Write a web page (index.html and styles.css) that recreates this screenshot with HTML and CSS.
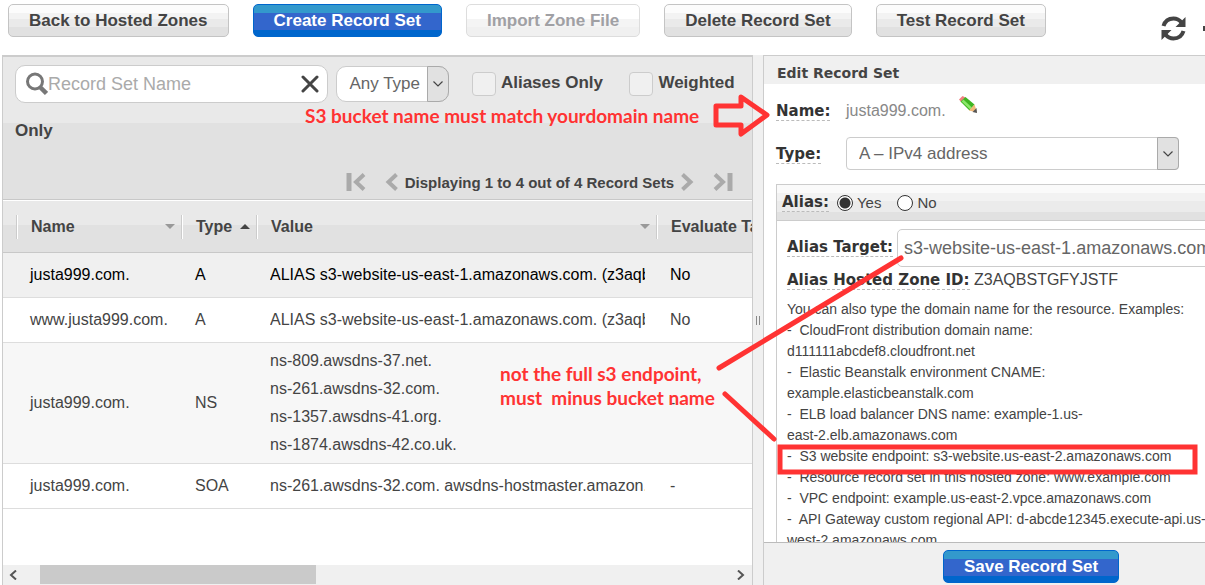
FILE: index.html
```html
<!DOCTYPE html>
<html lang="en">
<head>
<meta charset="utf-8">
<title>Record Sets</title>
<link rel="stylesheet" href="styles.css">
</head>
<body>
<div class="app">
  <header class="toolbar">
    <button type="button" class="btn">Back to Hosted Zones</button>
    <button type="button" class="btn btn-primary">Create Record Set</button>
    <button type="button" class="btn" disabled>Import Zone File</button>
    <button type="button" class="btn">Delete Record Set</button>
    <button type="button" class="btn">Test Record Set</button>
    <div class="tools">
      <button type="button" class="tool" aria-label="Refresh">
        <svg width="25" height="25" viewBox="0 0 25 25"><g fill="none" stroke="#444" stroke-width="4"><path d="M2.500 10C4 5 8 2.500 12.500 2.500c3.500 0 6 1.500 8 4"/><path d="M22.500 15c-1.500 5-5.500 7.500-10 7.500-3.500 0-6-1.500-8-4"/></g><path d="M24.500 1v10h-10zM.5 24V14h10z" fill="#444"/></svg>
      </button>
      <button type="button" class="tool" aria-label="Settings">
        <svg width="25" height="25" viewBox="0 0 25 25"><circle cx="12.500" cy="12.500" r="7" fill="none" stroke="#444" stroke-width="5"/><path d="M0 10h5v5H0zM20 10h5v5h-5zM10 0h5v5h-5zM10 20h5v5h-5z" fill="#444"/></svg>
      </button>
    </div>
  </header>

  <main class="panes">
    <section class="list">
      <div class="filters">
        <div class="filter-line">
          <span class="search">
            <svg width="22" height="24" viewBox="0 0 22 24" fill="none" stroke="#777"><circle cx="9" cy="9.500" r="7.500" stroke-width="3"/><path d="M14.500 15.500l6 6" stroke-width="4.500"/></svg>
            <input class="search-input" type="text" placeholder="Record Set Name" aria-label="Record Set Name">
            <button type="button" class="clear" aria-label="Clear"><svg width="18" height="18" viewBox="0 0 18 18"><path d="M2 2l14 14M16 2L2 16" stroke="#444" stroke-width="3" stroke-linecap="round"/></svg></button>
          </span>
          <span class="select select-round">
            <select aria-label="Record type"><option>Any Type</option></select>
            <span class="select-arrow"><svg width="10" height="6" viewBox="0 0 10 6"><path d="M.5.5L5 5 9.500.5" fill="none" stroke="#444" stroke-width="1.200"/></svg></span>
          </span>
          <input class="check" type="checkbox" id="aliases"><label class="check-label" for="aliases">Aliases Only</label>
          <input class="check" type="checkbox" id="weighted"><label class="check-label" for="weighted">Weighted Only</label>
        </div>
        <nav class="pager" aria-label="Pages">
          <button type="button" class="page-btn" aria-label="First page"><svg width="20" height="18" viewBox="0 0 20 18" fill="none" stroke="#aaa"><path d="M3 0v18" stroke-width="5"/><path d="M18 1.500L10 9l8 7.500" stroke-width="4"/></svg></button>
          <button type="button" class="page-btn" aria-label="Previous page"><svg width="13" height="18" viewBox="0 0 13 18" fill="none" stroke="#aaa"><path d="M11.500 1.500L3.500 9l8 7.500" stroke-width="4"/></svg></button>
          <span class="page-text">Displaying 1 to 4 out of 4 Record Sets</span>
          <button type="button" class="page-btn" aria-label="Next page"><svg width="13" height="18" viewBox="0 0 13 18" fill="none" stroke="#aaa"><path d="M1.500 1.500l8 7.500-8 7.500" stroke-width="4"/></svg></button>
          <button type="button" class="page-btn" aria-label="Last page"><svg width="20" height="18" viewBox="0 0 20 18" fill="none" stroke="#aaa"><path d="M17 0v18" stroke-width="5"/><path d="M2 1.500L10 9l-8 7.500" stroke-width="4"/></svg></button>
        </nav>
      </div>

      <div class="table-wrap">
        <table class="records">
          <colgroup><col class="c-gutter"><col class="c-name"><col class="c-type"><col class="c-value"><col class="c-eval"></colgroup>
          <thead>
            <tr>
              <td></td>
              <th scope="col"><span class="head"><span>Name</span><span class="sort"></span></span></th>
              <th scope="col"><span class="head"><span>Type</span><span class="sort sort-up"></span></span></th>
              <th scope="col"><span class="head"><span>Value</span><span class="sort"></span></span></th>
              <th scope="col"><span class="head"><span>Evaluate Target Health</span></span></th>
            </tr>
          </thead>
          <tbody>
            <tr class="selected"><td></td><td>justa999.com.</td><td>A</td><td><div class="clip">ALIAS s3-website-us-east-1.amazonaws.com. (z3aqbstgfyjstf)</div></td><td>No</td></tr>
            <tr><td></td><td>www.justa999.com.</td><td>A</td><td><div class="clip">ALIAS s3-website-us-east-1.amazonaws.com. (z3aqbstgfyjstf)</div></td><td>No</td></tr>
            <tr class="alt"><td></td><td>justa999.com.</td><td>NS</td><td><div class="clip">ns-809.awsdns-37.net.<br>ns-261.awsdns-32.com.<br>ns-1357.awsdns-41.org.<br>ns-1874.awsdns-42.co.uk.</div></td><td>-</td></tr>
            <tr><td></td><td>justa999.com.</td><td>SOA</td><td><div class="clip">ns-261.awsdns-32.com. awsdns-hostmaster.amazon.com.</div></td><td>-</td></tr>
          </tbody>
        </table>
      </div>

      <div class="scroll">
        <svg width="8" height="10" viewBox="0 0 8 10"><path d="M7 .5L2 5l5 4.500" fill="none" stroke="#555" stroke-width="2"/></svg>
        <div class="track"><div class="thumb"></div></div>
        <svg width="8" height="10" viewBox="0 0 8 10"><path d="M1 .5L6 5 1 9.500" fill="none" stroke="#555" stroke-width="2"/></svg>
      </div>
    </section>

    <div class="splitter"><span class="grip"></span></div>

    <section class="edit">
      <form class="edit-inner">
        <h2 class="edit-title">Edit Record Set</h2>
        <div class="edit-body">
          <div class="row row-name">
            <span class="cell-label"><span class="label">Name:</span></span>
            <span class="name-value">justa999.com.</span>
            <svg class="pencil" width="20" height="19" viewBox="0 0 20 19"><path d="M1 4.500L4.500 1l3 1.500L3.500 7.500z" fill="#f08080"/><path d="M2.500 6.500L7.500 2l9 7.500-5 6z" fill="#3fb522"/><path d="M4.500 5.500l8.500 8" stroke="#8be86a" stroke-width="2.500"/><path d="M11 15.500l5.500-6 2.500 8z" fill="#f0b878"/><path d="M14.500 17l4-4 .5 5z" fill="#555"/></svg>
          </div>
          <div class="row row-type">
            <span class="cell-label"><label class="label" for="rtype">Type:</label></span>
            <span class="select select-wide">
              <select id="rtype"><option>A – IPv4 address</option></select>
              <span class="select-arrow"><svg width="10" height="6" viewBox="0 0 10 6"><path d="M.5.5L5 5 9.500.5" fill="none" stroke="#444" stroke-width="1.200"/></svg></span>
            </span>
          </div>
          <div class="alias">
            <div class="alias-head" role="radiogroup" aria-labelledby="alias-label">
              <span class="label" id="alias-label">Alias:</span>
              <label class="radio"><input type="radio" name="alias" checked>Yes</label>
              <label class="radio"><input type="radio" name="alias">No</label>
            </div>
            <div class="alias-body">
              <div class="target">
                <label class="label" for="target">Alias Target:</label>
                <input id="target" class="target-input" type="text" value="s3-website-us-east-1.amazonaws.com">
              </div>
              <div class="zone"><span class="label">Alias Hosted Zone ID:</span> Z3AQBSTGFYJSTF</div>
              <div class="help">
                You can also type the domain name for the resource. Examples:<br>
                -&nbsp; CloudFront distribution domain name: d111111abcdef8.cloudfront.net<br>
                -&nbsp; Elastic Beanstalk environment CNAME: example.elasticbeanstalk.com<br>
                -&nbsp; ELB load balancer DNS name: example-1.us-<span class="host">east-2.elb.amazonaws.com</span><br>
                -&nbsp; S3 website endpoint: s3-website.us-east-2.amazonaws.com<br>
                -&nbsp; Resource record set in this hosted zone: www.example.com<br>
                -&nbsp; VPC endpoint: example.us-east-2.vpce.amazonaws.com<br>
                -&nbsp; API Gateway custom regional API: d-abcde12345.execute-api.us-<span class="host">west-2.amazonaws.com</span>
              </div>
            </div>
          </div>
        </div>
        <footer class="edit-foot"><button type="button" class="btn btn-primary">Save Record Set</button></footer>
      </form>
    </section>
  </main>

  <svg class="marks" width="1205" height="585" viewBox="0 0 1205 585" fill="none" stroke="#f33" stroke-width="5" stroke-linecap="round" stroke-linejoin="round">
    <path d="M716 106h25v-9l26 18-26 19v-9h-25z"/>
    <path d="M901 258L719 368M725 394l49 45"/>
    <rect x="780" y="447" width="415" height="25" stroke-linejoin="miter"/>
  </svg>
  <p class="note note-bucket">S3 bucket name must match yourdomain name</p>
  <p class="note note-endpoint">not the full s3 endpoint,<br>must&nbsp; minus bucket name</p>
</div>
</body>
</html>
```
FILE: styles.css
```css
* { box-sizing: border-box; }
body {
  margin: 0;
  font-family: "Liberation Sans", Arial, sans-serif;
  font-size: 16px;
  color: #444;
  background: #fff;
}
button, input, select { font: inherit; color: inherit; margin: 0; }
.app {
  position: relative;
  display: flex;
  flex-direction: column;
  height: 100vh;
  overflow: hidden;
}

/* Toolbar */
.toolbar {
  display: flex;
  flex: none;
  gap: 24px;
  padding: 4px 0 14px 8px;
}
.btn {
  flex: none;
  height: 33px;
  padding: 1px 20px 0;
  border: 1px solid #c4c4c4;
  border-radius: 5px;
  font-size: 17px;
  font-weight: bold;
  white-space: nowrap;
  background: linear-gradient(#fcfcfc 0 27%, #f3f3f3 27% 46%, #eaeaea 46% 70%, #e1e1e1 70%);
}
.btn:disabled {
  color: #a0a0a4;
  border-color: #ddd;
  background: linear-gradient(#fff 0 46%, #f4f4f4 46% 70%, #f0f0f0 70%);
}
.btn-primary {
  color: #fff;
  border-color: #06c;
  background: linear-gradient(#39c 0 27%, #36c 27% 80%, #06c 80%);
}
.tools {
  display: flex;
  gap: 17px;
  width: 44px;
  margin-left: auto;
  padding-top: 12px;
  overflow: hidden;
}
.tool { flex: none; padding: 0; border: 0; background: none; line-height: 0; height: 25px; }

/* Panes */
.panes { display: flex; flex: 1; min-height: 0; }
.list {
  display: flex;
  flex: 1;
  flex-direction: column;
  min-width: 0;
  margin-left: 2px;
  border-left: 1px solid #ccc;
  border-top: 2px solid #ccc;
}
.filters {
  flex: none;
  padding: 2px 12px 0;
  background: linear-gradient(#e9e9e9 0 66px, #e1e1e1 66px);
  border-bottom: 1px solid #c8c8c8;
}
.filter-line { line-height: 48px; }
.search {
  display: inline-flex;
  align-items: center;
  width: 313px;
  height: 38px;
  padding: 0 8px 0 10px;
  vertical-align: middle;
  background: #fff;
  border: 1px solid #ccc;
  border-radius: 10px;
}
.search-input { flex: 1; min-width: 0; padding: 0; border: 0; outline: 0; background: none; font-size: 18px; }
.search-input::placeholder { color: #aaa; opacity: 1; }
.search svg { flex: none; }
.clear { padding: 0; border: 0; background: none; line-height: 0; }
.select { position: relative; display: inline-block; vertical-align: middle; line-height: 1; }
.select select {
  appearance: none;
  width: 100%;
  height: 100%;
  padding: 0 24px 0 12px;
  color: #666;
  background: #fff;
  border: 1px solid #ccc;
  border-radius: 4px;
}
.select-arrow {
  position: absolute;
  top: 0;
  right: 0;
  bottom: 0;
  display: flex;
  align-items: center;
  justify-content: center;
  width: 22px;
  background: #e1e1e1;
  border: 1px solid #aaa;
  border-radius: 0 4px 4px 0;
  pointer-events: none;
}
.select-round { width: 113px; height: 36px; margin-left: 4px; font-size: 17px; }
.select-round select { border-radius: 10px; }
.select-round .select-arrow { border-radius: 0 10px 10px 0; }
.check {
  appearance: none;
  width: 24px;
  height: 24px;
  margin: 0 5px 0 18px;
  vertical-align: middle;
  background: #f0f0f0;
  border: 1px solid #ccc;
  border-radius: 4px;
}
.check-label { margin-right: 4px; font-size: 17px; font-weight: bold; }
.pager {
  display: flex;
  align-items: center;
  justify-content: flex-end;
  height: 44px;
  padding: 10px 7px 0 0;
  gap: 19px;
}
.page-btn { padding: 0; border: 0; background: none; line-height: 0; }
.page-text { margin: 0 -12px; font-size: 15px; font-weight: bold; }

/* Record table */
.table-wrap { flex: 1; min-height: 0; overflow: hidden; }
.records { width: 854px; table-layout: fixed; border-collapse: separate; border-spacing: 0; }
.c-gutter { width: 14px; }
.c-name { width: 165px; }
.c-type { width: 75px; }
.c-value { width: 400px; }
.c-eval { width: 200px; }
.records thead td, .records th {
  height: 53px;
  padding: 0;
  text-align: left;
  border-top: 1px solid #fff;
  border-bottom: 1px solid #c8c8c8;
  background: linear-gradient(#e9e9e9 0 24px, #e1e1e1 24px);
}
.head {
  display: flex;
  align-items: center;
  justify-content: space-between;
  height: 24px;
  padding: 0 7px 0 13px;
  border-left: 1px solid #fff;
  box-shadow: -1px 0 #ccc;
  white-space: nowrap;
}
.sort { border: 5px solid transparent; border-top-color: #999; border-bottom: 0; }
.sort-up { border-top: 0; border-bottom: 5px solid #444; }
.records tbody td {
  padding: 4px 12px 4px 13px;
  height: 45px;
  line-height: 28px;
  white-space: nowrap;
  border-bottom: 1px solid #ddd;
}
.clip { overflow: hidden; }
.selected { color: #000; background: #f0f0f0; }
.alt { background: #f7f7f7; }

.scroll {
  display: flex;
  flex: none;
  align-items: center;
  gap: 23px;
  height: 20px;
  padding: 0 7px 0 6px;
  background: #f0f0f0;
}
.scroll svg { flex: none; }
.track { flex: 1; height: 100%; padding-bottom: 1px; }
.thumb { width: 41%; height: 100%; background: #cacaca; }

.splitter {
  display: flex;
  flex: none;
  align-items: center;
  justify-content: center;
  width: 12px;
  background: #f0f0f0;
  border: 1px solid #ccc;
  border-width: 0 1px;
}
.grip { width: 4px; height: 9px; border: 1px solid #888; border-width: 0 1px; }

/* Edit form */
.edit { flex: none; width: 441px; overflow: hidden; border-top: 1px solid #ccc; }
.edit-inner { display: flex; flex-direction: column; width: 534px; height: 100%; }
.edit-title {
  flex: none;
  margin: 0;
  padding: 7px 13px 1px;
  font: bold 14px/20px "DejaVu Sans", Verdana, sans-serif;
  background: #f0f0f0;
}
.edit-body { flex: 1; min-height: 0; padding: 11px 12px 0; overflow: hidden; }
.label {
  font: bold 15px/17px "DejaVu Sans", Verdana, sans-serif;
  color: #333;
  border-bottom: 1px dashed #bbb;
}
.row { display: flex; align-items: center; }
.cell-label { width: 70px; line-height: 17px; }
.row-name { height: 32px; }
.name-value { width: 112px; color: #888; }
.pencil { align-self: flex-start; }
.row-type { height: 53px; }
.select-wide { width: 333px; height: 33px; font-size: 17px; }
.alias { height: 600px; margin-top: 4px; border: 1px solid #ccc; }
.alias-head {
  display: flex;
  align-items: center;
  gap: 8px;
  height: 36px;
  padding-left: 5px;
  border-bottom: 1px solid #ccc;
  background: linear-gradient(#fafafa 0 22%, #f2f2f2 22% 46%, #ebebeb 46% 78%, #e1e1e1 78%);
}
.radio { display: flex; align-items: center; gap: 4px; margin-right: 8px; font-size: 15px; }
.radio input {
  appearance: none;
  width: 16px;
  height: 16px;
  border: 1px solid #333;
  border-radius: 50%;
  background: #fff;
}
.radio input:checked { background: radial-gradient(#333 0 5px, #fff 6px); }
.alias-body { padding: 8px 10px; }
.target { display: flex; align-items: center; gap: 4px; }
.target-input {
  flex: 1;
  min-width: 0;
  height: 38px;
  padding: 0 6px;
  font-size: 18px;
  color: #666;
  border: 1px solid #ccc;
  border-radius: 5px;
}
.zone { padding-top: 1px; line-height: 24px; }
.help { width: 433px; margin-top: 7px; font-size: 14px; line-height: 21px; }
.host { white-space: nowrap; }
.edit-foot {
  display: flex;
  flex: none;
  justify-content: center;
  padding: 7px 0 2px;
  background: #f0f0f0;
  border-top: 1px solid #bbb;
}

/* Callouts drawn over the panes */
.marks { position: absolute; top: 0; left: 0; pointer-events: none; }
.note {
  position: absolute;
  margin: 0;
  color: #f33;
  font: bold 19px/24px Lato, sans-serif;
  white-space: nowrap;
}
.note-bucket { top: 104px; left: 305px; }
.note-endpoint { top: 362px; left: 500px; }
```
